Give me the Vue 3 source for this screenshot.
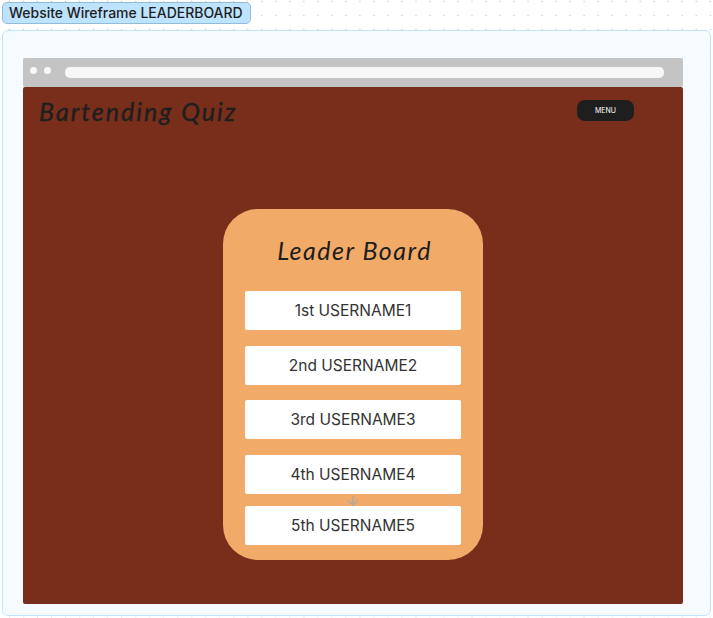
<script setup>
const players = [
  { rank: '1st', name: 'USERNAME1' },
  { rank: '2nd', name: 'USERNAME2' },
  { rank: '3rd', name: 'USERNAME3' },
  { rank: '4th', name: 'USERNAME4' },
  { rank: '5th', name: 'USERNAME5' },
]
</script>

<template>
  <main class="canvas">
    <div class="label">Website Wireframe LEADERBOARD</div>
    <section class="frame">
      <div class="browser">
        <div class="toolbar">
          <i class="dot"></i>
          <i class="dot"></i>
          <div class="address"></div>
        </div>
        <div class="page">
          <header class="header">
            <h1 class="title">Bartending Quiz</h1>
            <button class="menu">MENU</button>
          </header>
          <div class="board">
            <h2 class="heading">Leader Board</h2>
            <ol class="list">
              <li v-for="p in players" :key="p.rank" class="row">{{ p.rank }} {{ p.name }}</li>
            </ol>
            <svg class="arrow" viewBox="0 0 12 12">
              <path d="M6 0.8V10.2M1.6 5.8L6 10.2L10.4 5.8" />
            </svg>
          </div>
        </div>
      </div>
    </section>
  </main>
</template>

<style>
body {
  margin: 0;
  overflow: hidden;
}
</style>

<style scoped>
.canvas {
  box-sizing: border-box;
  width: 713px;
  height: 618px;
  padding: 2px 2px 0;
  background-color: #fff;
  background-image: radial-gradient(circle at 7px 7px, #d2d2d2 0.6px, transparent 1.1px);
  background-size: 14.02px 14.02px;
  background-position: 2.5px -5.5px;
  font-family: Inter, sans-serif;
}
.label {
  box-sizing: border-box;
  width: 249px;
  height: 22px;
  padding-left: 6px;
  border: 1px solid #93bbdb;
  border-radius: 5px;
  background: #bde3ff;
  color: #1e1e1e;
  font-size: 14px;
  font-weight: 500;
  line-height: 20px;
  letter-spacing: -0.02px;
  white-space: nowrap;
}
.frame {
  box-sizing: border-box;
  width: 709px;
  height: 586px;
  margin-top: 6px;
  padding: 27px 0 0 20px;
  border: 1px solid #c2e5ff;
  border-radius: 6px;
  background: #f5fbff;
}
.browser {
  width: 660px;
}
.toolbar {
  box-sizing: border-box;
  display: flex;
  height: 29px;
  padding: 9px 0 0 7px;
  border-radius: 2px;
  background: #c4c4c4;
}
.dot {
  width: 7px;
  height: 7px;
  margin-right: 7px;
  border-radius: 50%;
  background: #f8f8f8;
}
.address {
  width: 599px;
  height: 11px;
  margin-left: 7px;
  border-radius: 5px;
  background: #f7f7f7;
}
.page {
  display: flex;
  flex-direction: column;
  height: 517px;
  border-radius: 2px;
  background: #782e1b;
}
.header {
  display: flex;
  justify-content: space-between;
  height: 122px;
  padding: 0 49px 0 16px;
}
.title,
.heading {
  margin: 0;
  color: #1e1e1e;
  font-family: Lato, sans-serif;
  font-style: italic;
  font-weight: 400;
  white-space: nowrap;
}
.title {
  padding-top: 8px;
  font-size: 25px;
  line-height: 32px;
  letter-spacing: 2px;
  -webkit-text-stroke: 0.4px #1e1e1e;
}
.menu {
  width: 57px;
  height: 21px;
  margin: 13px 0 0;
  padding: 0;
  border: 0;
  border-radius: 8px;
  background: #1e1e1e;
  color: #fff;
  font-family: Inter, sans-serif;
  font-size: 7px;
  line-height: 21px;
}
.board {
  position: relative;
  box-sizing: border-box;
  width: 260px;
  height: 351px;
  margin-left: 200px;
  padding: 24px 22px 0;
  border-radius: 35px;
  background: #f2aa68;
}
.heading {
  padding-left: 3px;
  font-size: 25px;
  line-height: 34px;
  letter-spacing: 1.5px;
  text-align: center;
}
.list {
  display: flex;
  flex-direction: column;
  gap: 15.7px;
  margin: 24px 0 0;
  padding: 0;
  list-style: none;
}
.row {
  height: 39px;
  border-radius: 2px;
  background: #fff;
  color: #333;
  font-size: 15.5px;
  line-height: 39px;
  text-align: center;
}
.row:last-child {
  margin-top: -3.5px;
}
.arrow {
  position: absolute;
  left: 124px;
  top: 286px;
  width: 12px;
  height: 12px;
  fill: none;
  stroke: #b3aaa0;
  stroke-width: 1.6;
}
</style>
